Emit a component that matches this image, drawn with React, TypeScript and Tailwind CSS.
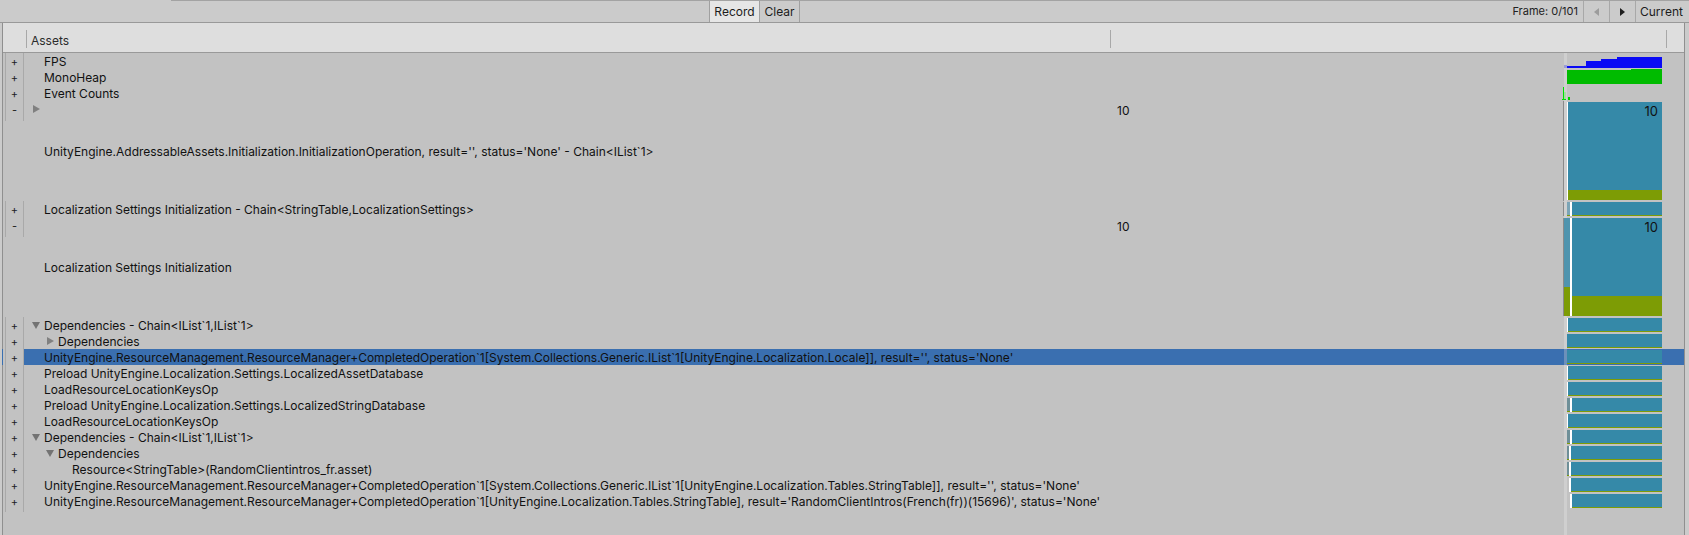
import React from "react"
import type { ReactNode } from "react"

const TEAL = "#3589a8"
const OLIVE = "#7d9c05"
const STRIP = "#cfcfcf"

type Seg = { gray?: [number, number]; white?: [number, number]; from: number }

type Row = {
  sign: "+" | "-"
  label?: string
  depth?: number
  arrow?: "right" | "down"
  tall?: boolean
  count?: string
  selected?: boolean
  graph: ReactNode
}

const indent = ["pl-[8px]", "pl-[22px]", "pl-[36px]"]

function Arrow({ dir }: { dir: "right" | "down" }) {
  return (
    <svg width={8} height={8} className="mr-[4px] shrink-0 block">
      {dir === "right" ? (
        <path d="M1 0 L8 4 L1 8 Z" fill="#808080" />
      ) : (
        <path d="M0 1 L8 1 L4 8 Z" fill="#737373" />
      )}
    </svg>
  )
}

function GraphCell({ h, dim, children }: { h: number; dim?: boolean; children?: ReactNode }) {
  return (
    <div className="w-[124px] shrink-0">
      <svg width={124} height={h} className="block">
        <rect x={4} y={0} width={3} height={h} fill={STRIP} opacity={dim ? 0.35 : 1} />
        {children}
      </svg>
    </div>
  )
}

// one 16px row of the timeline column
function Slim({ gray, white, from }: Seg) {
  const left = gray ? gray[0] : from
  return (
    <>
      {gray && <rect x={gray[0]} y={1} width={gray[1] - gray[0]} height={14} fill="#6e8f98" />}
      <rect x={from} y={1} width={102 - from} height={14} fill={TEAL} />
      <rect x={left} y={14} width={102 - left} height={1} fill={OLIVE} />
      {white && <rect x={white[0]} y={1} width={white[1] - white[0]} height={14} fill="#ffffff" />}
    </>
  )
}

function Count10() {
  return (
    <text x={98} y={15} textAnchor="end" fontSize={13} fontFamily="Inter, sans-serif" fill="#111">
      10
    </text>
  )
}

const fpsGraph = (
  <>
    <rect x={4} y={12} width={3} height={3} fill="#9a9ad8" />
    <path d="M7 13 H26 V8 H41 V6 H57 V4 H102 V15 H7 Z" fill="#0a0af5" />
  </>
)

const monoGraph = (
  <>
    <rect x={7} y={1} width={64} height={14} fill="#00bb00" />
    <rect x={71} y={0} width={31} height={15} fill="#00bb00" />
  </>
)

const eventGraph = (
  <>
    <rect x={4} y={7} width={2} height={8} fill="#9ee09e" />
    <rect x={3} y={2} width={1} height={13} fill="#00e000" />
    <rect x={2} y={14} width={4} height={1} fill="#00e000" />
    <rect x={8} y={12} width={2} height={3} fill="#00d000" />
  </>
)

const tall1Graph = (
  <>
    <rect x={3} y={0} width={1} height={100} fill="#8a8a8a" />
    <rect x={8} y={1} width={94} height={98} fill={TEAL} />
    <rect x={8} y={89} width={94} height={10} fill={OLIVE} />
    <rect x={7} y={1} width={1} height={98} fill="#ffffff" />
    <Count10 />
  </>
)

const chainGraph = (
  <>
    <rect x={3} y={1} width={1} height={14} fill="#8a8a8a" />
    <rect x={7} y={1} width={3} height={14} fill="#7aa4b6" />
    <rect x={12} y={1} width={90} height={14} fill={TEAL} />
    <rect x={7} y={14} width={95} height={1} fill={OLIVE} />
    <rect x={10} y={1} width={2} height={14} fill="#ffffff" />
  </>
)

const tall2Graph = (
  <>
    <rect x={3} y={1} width={1} height={98} fill="#8a8a8a" />
    <rect x={4} y={1} width={6} height={69} fill="#4f94ae" />
    <rect x={4} y={70} width={6} height={29} fill={OLIVE} />
    <rect x={12} y={1} width={90} height={78} fill={TEAL} />
    <rect x={12} y={79} width={90} height={20} fill={OLIVE} />
    <rect x={10} y={1} width={2} height={98} fill="#ffffff" />
    <Count10 />
  </>
)

const rows: Row[] = [
  { sign: "+", label: "FPS", graph: fpsGraph },
  { sign: "+", label: "MonoHeap", graph: monoGraph },
  { sign: "+", label: "Event Counts", graph: eventGraph },
  {
    sign: "-",
    tall: true,
    arrow: "right",
    count: "10",
    label:
      "UnityEngine.AddressableAssets.Initialization.InitializationOperation, result='', status='None' - Chain<IList`1>",
    graph: tall1Graph,
  },
  {
    sign: "+",
    label: "Localization Settings Initialization - Chain<StringTable,LocalizationSettings>",
    graph: chainGraph,
  },
  { sign: "-", tall: true, count: "10", label: "Localization Settings Initialization", graph: tall2Graph },
  { sign: "+", arrow: "down", label: "Dependencies - Chain<IList`1,IList`1>", graph: <Slim white={[7, 8]} from={8} /> },
  { sign: "+", arrow: "right", depth: 1, label: "Dependencies", graph: <Slim from={7} /> },
  {
    sign: "+",
    selected: true,
    label:
      "UnityEngine.ResourceManagement.ResourceManager+CompletedOperation`1[System.Collections.Generic.IList`1[UnityEngine.Localization.Locale]], result='', status='None'",
    graph: <Slim from={7} />,
  },
  { sign: "+", label: "Preload UnityEngine.Localization.Settings.LocalizedAssetDatabase", graph: <Slim white={[7, 8]} from={8} /> },
  { sign: "+", label: "LoadResourceLocationKeysOp", graph: <Slim white={[7, 8]} from={8} /> },
  {
    sign: "+",
    label: "Preload UnityEngine.Localization.Settings.LocalizedStringDatabase",
    graph: <Slim gray={[7, 10]} white={[10, 12]} from={12} />,
  },
  { sign: "+", label: "LoadResourceLocationKeysOp", graph: <Slim white={[7, 8]} from={8} /> },
  {
    sign: "+",
    arrow: "down",
    label: "Dependencies - Chain<IList`1,IList`1>",
    graph: <Slim gray={[7, 10]} white={[10, 12]} from={12} />,
  },
  { sign: "+", arrow: "down", depth: 1, label: "Dependencies", graph: <Slim gray={[7, 9]} white={[9, 11]} from={11} /> },
  {
    sign: "+",
    depth: 2,
    label: "Resource<StringTable>(RandomClientintros_fr.asset)",
    graph: <Slim gray={[7, 9]} white={[9, 11]} from={11} />,
  },
  {
    sign: "+",
    label:
      "UnityEngine.ResourceManagement.ResourceManager+CompletedOperation`1[System.Collections.Generic.IList`1[UnityEngine.Localization.Tables.StringTable]], result='', status='None'",
    graph: <Slim white={[9, 11]} from={11} />,
  },
  {
    sign: "+",
    label:
      "UnityEngine.ResourceManagement.ResourceManager+CompletedOperation`1[UnityEngine.Localization.Tables.StringTable], result='RandomClientIntros(French(fr))(15696)', status='None'",
    graph: <Slim white={[10, 12]} from={12} />,
  },
]

function TreeRow({ row }: { row: Row }) {
  const lead = row.arrow ? <Arrow dir={row.arrow} /> : <div className="w-[12px] shrink-0" />
  return (
    <div className={`relative flex ${row.tall ? "h-[100px]" : "h-[16px]"}`}>
      {row.selected && <div className="absolute left-[-1px] top-0 h-full w-px bg-[#3a6fb0]" />}
      <div
        className={`ml-[2px] w-[19px] shrink-0 border-l border-r border-[#a9a9a9] pt-px text-center text-[11px] leading-[16px] text-[#1e1e1e] ${
          row.tall ? "h-[20px]" : "h-full"
        }`}
      >
        {row.sign}
      </div>
      <div className={`flex ${row.selected ? "bg-[#3a6fb0]" : ""}`}>
        <div className={`grid w-[1086px] shrink-0 ${indent[row.depth ?? 0]}`}>
          {row.tall ? (
            <>
              <div className="col-start-1 row-start-1 flex h-[16px] items-center self-start">{row.arrow && lead}</div>
              <div className="col-start-1 row-start-1 self-center whitespace-nowrap pl-[12px] pt-[2px] leading-[16px]">
                {row.label}
              </div>
            </>
          ) : (
            <div className="flex h-[16px] items-center whitespace-nowrap">
              {lead}
              <span className="pt-[2px] leading-[16px]">{row.label}</span>
            </div>
          )}
        </div>
        <div className="w-[450px] shrink-0 pl-[7px] pt-[2px] leading-[16px]">{row.count}</div>
        <GraphCell h={row.tall ? 100 : 16} dim={row.selected}>
          {row.graph}
        </GraphCell>
      </div>
    </div>
  )
}

function Toolbar() {
  return (
    <div>
      <div className="ml-[171px] h-px bg-[#a3a3a3]" />
      <div className="flex h-[22px] border-b border-[#999999] text-[12px] text-[#1c1c1c]">
        <div className="w-[709px] shrink-0" />
        <div className="w-[51px] shrink-0 border-l border-r border-[#a0a0a0] bg-[#e6e6e6] text-center leading-[21px]">
          Record
        </div>
        <div className="w-[40px] shrink-0 border-r border-[#a0a0a0] text-center leading-[21px]">Clear</div>
        <div className="ml-auto mr-[5px] text-[11px] leading-[21px] text-[#222]">Frame: 0/101</div>
        <div className="flex w-[26px] shrink-0 items-center justify-center border-l border-[#a8a8a8]">
          <svg width={5} height={8} className="block">
            <path d="M5 0 L0 4 L5 8 Z" fill="#9c9c9c" />
          </svg>
        </div>
        <div className="flex w-[26px] shrink-0 items-center justify-center border-l border-[#a8a8a8]">
          <svg width={5} height={8} className="block">
            <path d="M0 0 L5 4 L0 8 Z" fill="#1e1e1e" />
          </svg>
        </div>
        <div className="w-[54px] shrink-0 border-l border-[#a8a8a8] pl-[4px] leading-[21px]">Current</div>
      </div>
    </div>
  )
}

export default function App() {
  return (
    <div className="h-[535px] w-[1689px] overflow-hidden bg-[#cbcbcb] font-['Inter',sans-serif] text-[12px] text-[#111111]">
      <Toolbar />
      <div className="flex">
        <div className="w-[2px] shrink-0" />
        <div className="flex h-[512px] w-[1683px] shrink-0 flex-col border-l border-r border-[#8f8f8f] bg-[#c2c2c2]">
          <div className="flex h-[30px] shrink-0 border-b border-[#999999] bg-[#dedede] pt-[7px]">
            <div className="w-[23px] shrink-0" />
            <div className="h-[18px] w-[1084px] shrink-0 border-l border-[#a8a8a8] pl-[4px] pt-[2px] leading-[18px] text-[#2b2b2b]">
              Assets
            </div>
            <div className="h-[18px] w-[556px] shrink-0 border-l border-[#a8a8a8]" />
            <div className="h-[18px] border-l border-[#a8a8a8]" />
          </div>
          {rows.map((r, i) => (
            <TreeRow key={i} row={r} />
          ))}
          <div className="flex flex-1">
            <div className="ml-[2px] h-[3px] w-[19px] shrink-0 border-l border-r border-[#a9a9a9]" />
            <div className="w-[1536px] shrink-0" />
            <div className="w-[124px] shrink-0">
              <div className="ml-[4px] h-full w-[3px] bg-[#cfcfcf]" />
            </div>
          </div>
        </div>
      </div>
    </div>
  )
}
